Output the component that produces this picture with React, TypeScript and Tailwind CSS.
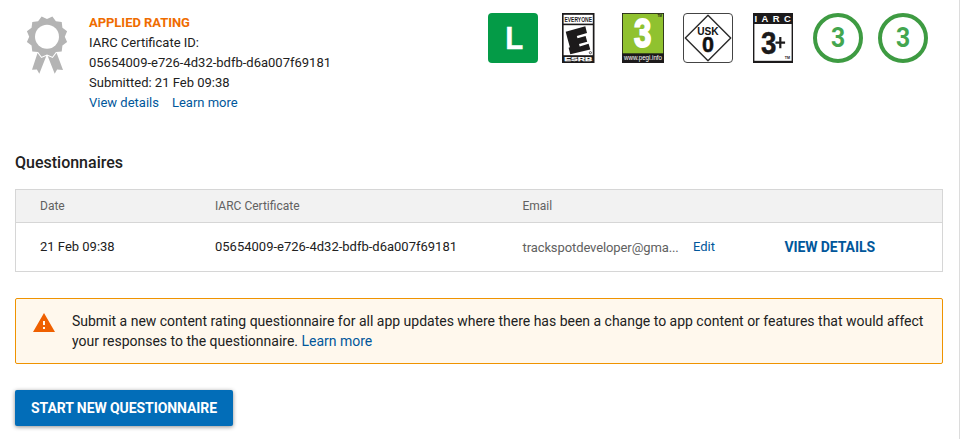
import React from "react";

const medalPoints = Array.from({ length: 24 }, (_, i) => {
  const angle = ((i * 15 + 15) * Math.PI) / 180;
  const r = i % 2 === 0 ? 20.8 : 17.8;
  return `${(21 + r * Math.sin(angle)).toFixed(2)},${(20.7 - r * Math.cos(angle)).toFixed(2)}`;
}).join(" ");

function Medal() {
  return (
    <svg width="42" height="60" viewBox="0 0 42 60" className="shrink-0" fill="#b4b4b4">
      <path d="M12.5 34 L20.3 40 L13.3 57.8 L10.9 53.6 L6 53.8 Z" />
      <path d="M29.5 34 L21.7 40 L28.7 57.8 L31.1 53.6 L37 54 Z" />
      <polygon points={medalPoints} stroke="#fff" strokeWidth="2" paintOrder="stroke" />
      <circle cx="21" cy="20.7" r="12" fill="#fff" />
    </svg>
  );
}

function ClassInd() {
  return (
    <div className="flex size-[50px] items-center justify-center rounded-[4px] bg-[#049b47]">
      <svg width="50" height="50" viewBox="0 0 50 50">
        <text x="17.3" y="35.5" fontFamily="Liberation Sans, sans-serif" fontWeight="700" fontSize="31" textLength="18" lengthAdjust="spacingAndGlyphs" fill="#fff" stroke="#fff" strokeWidth=".4">L</text>
      </svg>
    </div>
  );
}

function Esrb() {
  return (
    <svg width="33" height="50" viewBox="0 0 33 50" className="ml-6" fontFamily="Liberation Sans, sans-serif" fontWeight="700">
      <rect width="32.5" height="50" fill="#1c1a1b" />
      <rect x="1.6" y="1.8" width="29.2" height="8.8" fill="#fff" />
      <rect x="1.6" y="12.2" width="29.2" height="30" fill="#fff" />
      <text x="2.4" y="8.8" fontSize="7" textLength="27.6" lengthAdjust="spacingAndGlyphs" fill="#1c1a1b">EVERYONE</text>
      <path d="M3.7 18.8 L23.3 13.2 L25 20 L14.8 22.9 L15.5 25.3 L23.6 23 L25.2 28.7 L17 31 L17.7 33.4 L26.6 30.8 L28.3 36.4 L8.3 41.2 L6.6 34.8 L7.9 34.3 L5.4 25.2 Z" fill="#1c1a1b" />
      <circle cx="28.4" cy="39.7" r="1.1" fill="none" stroke="#1c1a1b" strokeWidth=".7" />
      <text x="2.3" y="47.7" fontSize="5.6" textLength="28" lengthAdjust="spacingAndGlyphs" fill="#fff" stroke="#fff" strokeWidth=".25">ESRB</text>
    </svg>
  );
}

function Pegi() {
  return (
    <svg width="42" height="50" viewBox="0 0 42 50" className="ml-[27px]" fontFamily="Liberation Sans, sans-serif">
      <rect width="42" height="50" fill="#1c1a1b" />
      <rect x=".8" y=".8" width="40.4" height="39.5" fill="#90c22f" />
      <text x="12" y="34.3" fontSize="40" fontWeight="700" textLength="17.4" lengthAdjust="spacingAndGlyphs" fill="#fff" stroke="#fff" strokeWidth="1.8">3</text>
      <text x="35.4" y="3.8" fontSize="3.2" fontWeight="700" fill="#1c1a1b">TM</text>
      <text x="2" y="46.5" fontSize="6.8" textLength="38" lengthAdjust="spacingAndGlyphs" fill="#fff">www.pegi.info</text>
    </svg>
  );
}

function Usk() {
  return (
    <svg width="50" height="50" viewBox="0 0 50 50" className="ml-[19px]" fontFamily="Liberation Sans, sans-serif" fontWeight="700">
      <rect x=".5" y=".5" width="49" height="49" rx="3.5" fill="#fff" stroke="#444" />
      <path d="M25 2.3 L47.7 25 L25 47.7 L2.3 25 Z" fill="#fff" stroke="#292929" strokeWidth="1.4" strokeLinejoin="round" />
      <text x="14.2" y="21.5" fontSize="10.2" textLength="21.4" lengthAdjust="spacingAndGlyphs" fill="#111">USK</text>
      <text x="18.9" y="38.6" fontSize="22" textLength="12" lengthAdjust="spacingAndGlyphs" fill="#111" stroke="#111" strokeWidth=".5">0</text>
    </svg>
  );
}

function Iarc() {
  return (
    <svg width="40" height="50" viewBox="0 0 40 50" className="ml-5" fontFamily="Liberation Sans, sans-serif" fontWeight="700" fill="#1c1a1b">
      <rect width="40" height="50" />
      <rect x="1.4" y="11" width="37.2" height="36.8" fill="#fff" />
      <g fontSize="9.4" fill="#fff">
        <text x="1.6" y="9">I</text>
        <text x="8.4" y="9">A</text>
        <text x="19.7" y="9">R</text>
        <text x="31" y="9">C</text>
      </g>
      <text x="8" y="41.4" fontSize="32" textLength="15.4" lengthAdjust="spacingAndGlyphs" stroke="#1c1a1b" strokeWidth=".5">3</text>
      <path d="M26.2 24h2.2v4.5h3.7v2.2h-3.7v4.6h-2.2v-4.6h-3.7v-2.2h3.7z" />
      <text x="31.8" y="46.4" fontSize="3.6">TM</text>
    </svg>
  );
}

function RoundRating({ className }: { className: string }) {
  return (
    <svg width="50" height="50" viewBox="0 0 50 50" className={className}>
      <circle cx="25" cy="25" r="23" fill="#fff" stroke="#3e9b42" strokeWidth="4" />
      <text x="25" y="34" textAnchor="middle" fontFamily="Roboto, sans-serif" fontWeight="700" fontSize="27" textLength="14.2" lengthAdjust="spacingAndGlyphs" fill="#43a64f">3</text>
    </svg>
  );
}

export default function App() {
  return (
    <div className="h-[439px] w-[960px] overflow-hidden border-r border-[#dcdcdc] bg-white font-['Roboto',sans-serif] text-[13px] leading-5 text-[#212121]">
      <header className="flex h-[141px] items-start pt-[13px] pl-[26px]">
        <div className="mt-[3px]"><Medal /></div>
        <div className="ml-[21px] w-[399px]">
          <p className="font-bold tracking-[-0.04px] text-[#ef6c00]">APPLIED RATING</p>
          <p>IARC Certificate ID:</p>
          <p>05654009-e726-4d32-bdfb-d6a007f69181</p>
          <p>Submitted: 21 Feb 09:38</p>
          <div className="flex gap-[13px] text-[#01579b]">
            <a>View details</a>
            <a>Learn more</a>
          </div>
        </div>
        <div className="flex">
          <ClassInd />
          <Esrb />
          <Pegi />
          <Usk />
          <Iarc />
          <RoundRating className="ml-5" />
          <RoundRating className="ml-[15px]" />
        </div>
      </header>

      <main className="pl-[15px]">
        <h2 className="h-12 pt-2.5 text-base leading-6 font-medium">Questionnaires</h2>

        <section className="w-[928px] border border-[#d6d6d6]">
          <div className="flex h-8 items-center bg-[#f2f2f2] pl-6 text-xs text-[#616161]">
            <span className="w-[175px]">Date</span>
            <span className="w-[307.5px]">IARC Certificate</span>
            <span>Email</span>
          </div>
          <div className="flex h-[49px] items-center border-t border-[#d6d6d6] pl-6">
            <span className="w-[175px]">21 Feb 09:38</span>
            <span className="w-[307.5px]">05654009-e726-4d32-bdfb-d6a007f69181</span>
            <span className="w-[170.5px] pt-0.5 tracking-[-0.1px] text-[#616161]">trackspotdeveloper@gma...</span>
            <a className="w-[91.5px] text-[#01579b]">Edit</a>
            <a className="text-sm font-bold tracking-[-0.1px] text-[#01579b]">VIEW DETAILS</a>
          </div>
        </section>

        <section className="mt-[26px] flex h-[66px] w-[928px] rounded-[2px] border border-[#ef9300] bg-[#fff8ed] pt-3 pl-4">
          <svg width="24" height="24" viewBox="0 0 24 24" className="shrink-0" fill="#ef6000">
            <path d="M1 21h22L12 2 1 21zm12-3h-2v-2h2v2zm0-4h-2v-4h2v4z" />
          </svg>
          <p className="ml-4 w-[862px] text-sm leading-5 tracking-[-0.006px]">
            Submit a new content rating questionnaire for all app updates where there has been a change to app content or features that would affect your responses to the questionnaire. <a className="text-[#01579b]">Learn more</a>
          </p>
        </section>

        <button className="mt-[26px] flex h-9 w-[218px] items-center justify-center rounded-[2px] bg-[#026db8] text-sm font-bold tracking-[-0.08px] text-white shadow-[0_1px_4px_rgba(0,0,0,0.45)]">
          START NEW QUESTIONNAIRE
        </button>
      </main>
    </div>
  );
}
